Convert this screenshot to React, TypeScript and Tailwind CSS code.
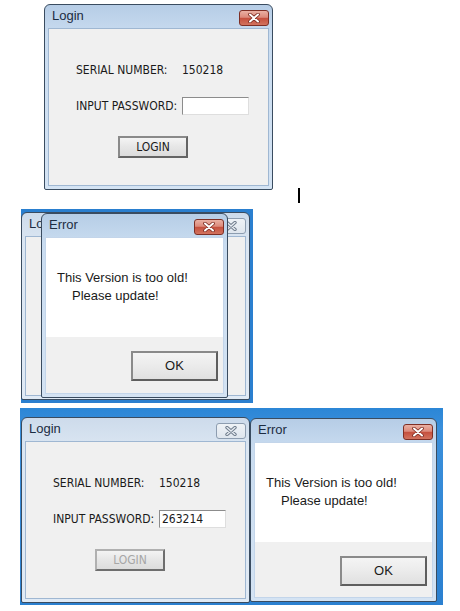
import type { ReactNode } from 'react';

const labelFont = "font-['Liberation_Sans_Narrow','DejaVu_Sans_Condensed','Liberation_Sans',sans-serif] text-[12px]";
const uiFont = "font-['Liberation_Sans',Arial,sans-serif]";

function CloseButton({ active }: { active: boolean }) {
    if (active) {
        return (
            <div className="mt-[5px] flex h-[16px] w-[30px] shrink-0 items-center justify-center rounded-[3px] border border-[#7e2f25] bg-[linear-gradient(#eab0a3,#dc8a7b_45%,#c5503e_52%,#d2735f)]">
                <svg width="12" height="10" viewBox="0 0 12 10">
                    <path d="M2 1.5 L10 8.5 M10 1.5 L2 8.5" stroke="#7a2a20" strokeWidth="3.6" strokeLinecap="round" />
                    <path d="M2 1.5 L10 8.5 M10 1.5 L2 8.5" stroke="#ffffff" strokeWidth="2" strokeLinecap="round" />
                </svg>
            </div>
        );
    }
    return (
        <div className="mt-[5px] flex h-[16px] w-[30px] shrink-0 items-center justify-center rounded-[3px] border border-[#8d9db0] bg-[linear-gradient(#eef2f6,#dfe6ee)]">
            <svg width="12" height="10" viewBox="0 0 12 10">
                <path d="M2 1.5 L10 8.5 M10 1.5 L2 8.5" stroke="#6f7c8c" strokeWidth="3.4" strokeLinecap="round" />
                <path d="M2 1.5 L10 8.5 M10 1.5 L2 8.5" stroke="#e8edf3" strokeWidth="1.4" strokeLinecap="round" />
            </svg>
        </div>
    );
}

function Window({ title, active, size, bodyClass, children }: {
    title: string;
    active: boolean;
    size: string;
    bodyClass: string;
    children?: ReactNode;
}) {
    return (
        <div
            className={`${size} flex shrink-0 flex-col rounded-t-[6px] rounded-b-[2px] border border-[#3a4c60] px-[3px] pb-[3px] ${
                active
                    ? 'bg-[linear-gradient(#b6cde6,#c9dcf0_30px,#d4e3f3)]'
                    : 'bg-[linear-gradient(#cddbeb,#dbe6f2_30px,#e0eaf5)]'
            }`}
        >
            <div className="flex h-[23px] shrink-0 items-start justify-between">
                <span className={`${uiFont} ml-[4px] mt-[3px] text-[13px] leading-[16px] text-[#1c2c42]`}>{title}</span>
                <CloseButton active={active} />
            </div>
            <div className={`flex flex-1 flex-col overflow-hidden border border-[#9fb7d2] ${bodyClass}`}>{children}</div>
        </div>
    );
}

function LoginBody({ password, disabled }: { password: string; disabled: boolean }) {
    return (
        <div className={`${labelFont} flex flex-col pl-[27px] pt-[34px] text-[#1a1a1a]`}>
            <div className="flex h-[14px] items-center">
                <span className="w-[106px]">SERIAL NUMBER:</span>
                <span>150218</span>
            </div>
            <div className="mt-[20px] flex h-[18px] items-center">
                <span className="w-[106px]">INPUT PASSWORD:</span>
                <div className="flex h-[18px] w-[67px] items-center border border-[#8c8c8c] border-b-[#dedede] border-r-[#dedede] bg-white pl-[2px]">
                    {password}
                </div>
            </div>
            <div
                className={`ml-[42px] mt-[21px] flex h-[22px] w-[70px] items-center justify-center border-2 bg-[linear-gradient(#f4f4f4,#e6e6e6_50%,#dcdcdc)] ${
                    disabled
                        ? 'border-[#b0b0b0] border-b-[#6e6e6e] border-r-[#6e6e6e] text-[#a6a6a6]'
                        : 'border-[#8a8a8a] border-b-[#646464] border-r-[#646464]'
                }`}
            >
                LOGIN
            </div>
        </div>
    );
}

function ErrorBody() {
    return (
        <>
            <div className={`${uiFont} h-[99px] shrink-0 bg-white pl-[11px] pt-[31px] text-[13px] leading-[18px] text-[#1a1a1a]`}>
                <div>This Version is too old!</div>
                <div className="pl-[15px]">Please update!</div>
            </div>
            <div className="flex flex-1 justify-end bg-[#f0f0f0] pr-[5px] pt-[14px]">
                <div className={`${uiFont} flex h-[30px] w-[87px] items-center justify-center border-2 border-[#8a8a8a] border-b-[#5e5e5e] border-r-[#5e5e5e] bg-[linear-gradient(#f4f4f4,#ebebeb_50%,#e0e0e0)] text-[13px] text-[#1a1a1a]`}>
                    OK
                </div>
            </div>
        </>
    );
}

export default function App() {
    return (
        <div className="h-[611px] w-[460px] overflow-hidden bg-white">
            {/* first shot: login */}
            <div className="mt-[4px] flex h-[186px] items-start pl-[44px]">
                <Window title="Login" active size="w-[229px] h-[186px]" bodyClass="bg-[#f0f0f0]">
                    <LoginBody password="" disabled={false} />
                </Window>
                <div className="ml-[25px] mt-[184px] h-[15px] w-[2px] shrink-0 bg-black" />
            </div>

            {/* second shot: error over login (only "Lo" of the title shows) */}
            <div className="relative ml-[21px] mt-[19px] h-[194px] w-[232px] overflow-hidden bg-[#2a7fcf] pr-[3px] pt-[3px]">
                <Window title="Lo" active={false} size="w-[229px] h-[188px]" bodyClass="bg-[#f0f0f0]" />
                <div className="absolute left-[20px] top-[4px]">
                    <Window title="Error" active size="w-[187px] h-[185px]" bodyClass="bg-[#f0f0f0] border-[#c3d5ea]">
                        <ErrorBody />
                    </Window>
                </div>
            </div>

            {/* third shot: login + error side by side */}
            <div className="ml-[20px] mt-[5px] flex h-[197px] w-[423px] items-start bg-[linear-gradient(#2b86d6,#3a8fdb_20px,#2b80d0)] pl-[1px] pt-[9px]">
                <Window title="Login" active={false} size="w-[229px] h-[186px]" bodyClass="bg-[#f0f0f0]">
                    <LoginBody password="263214" disabled />
                </Window>
                <div className="mt-[1px]">
                    <Window title="Error" active size="w-[187px] h-[184px]" bodyClass="bg-[#f0f0f0] border-[#c3d5ea]">
                        <ErrorBody />
                    </Window>
                </div>
            </div>
        </div>
    );
}
